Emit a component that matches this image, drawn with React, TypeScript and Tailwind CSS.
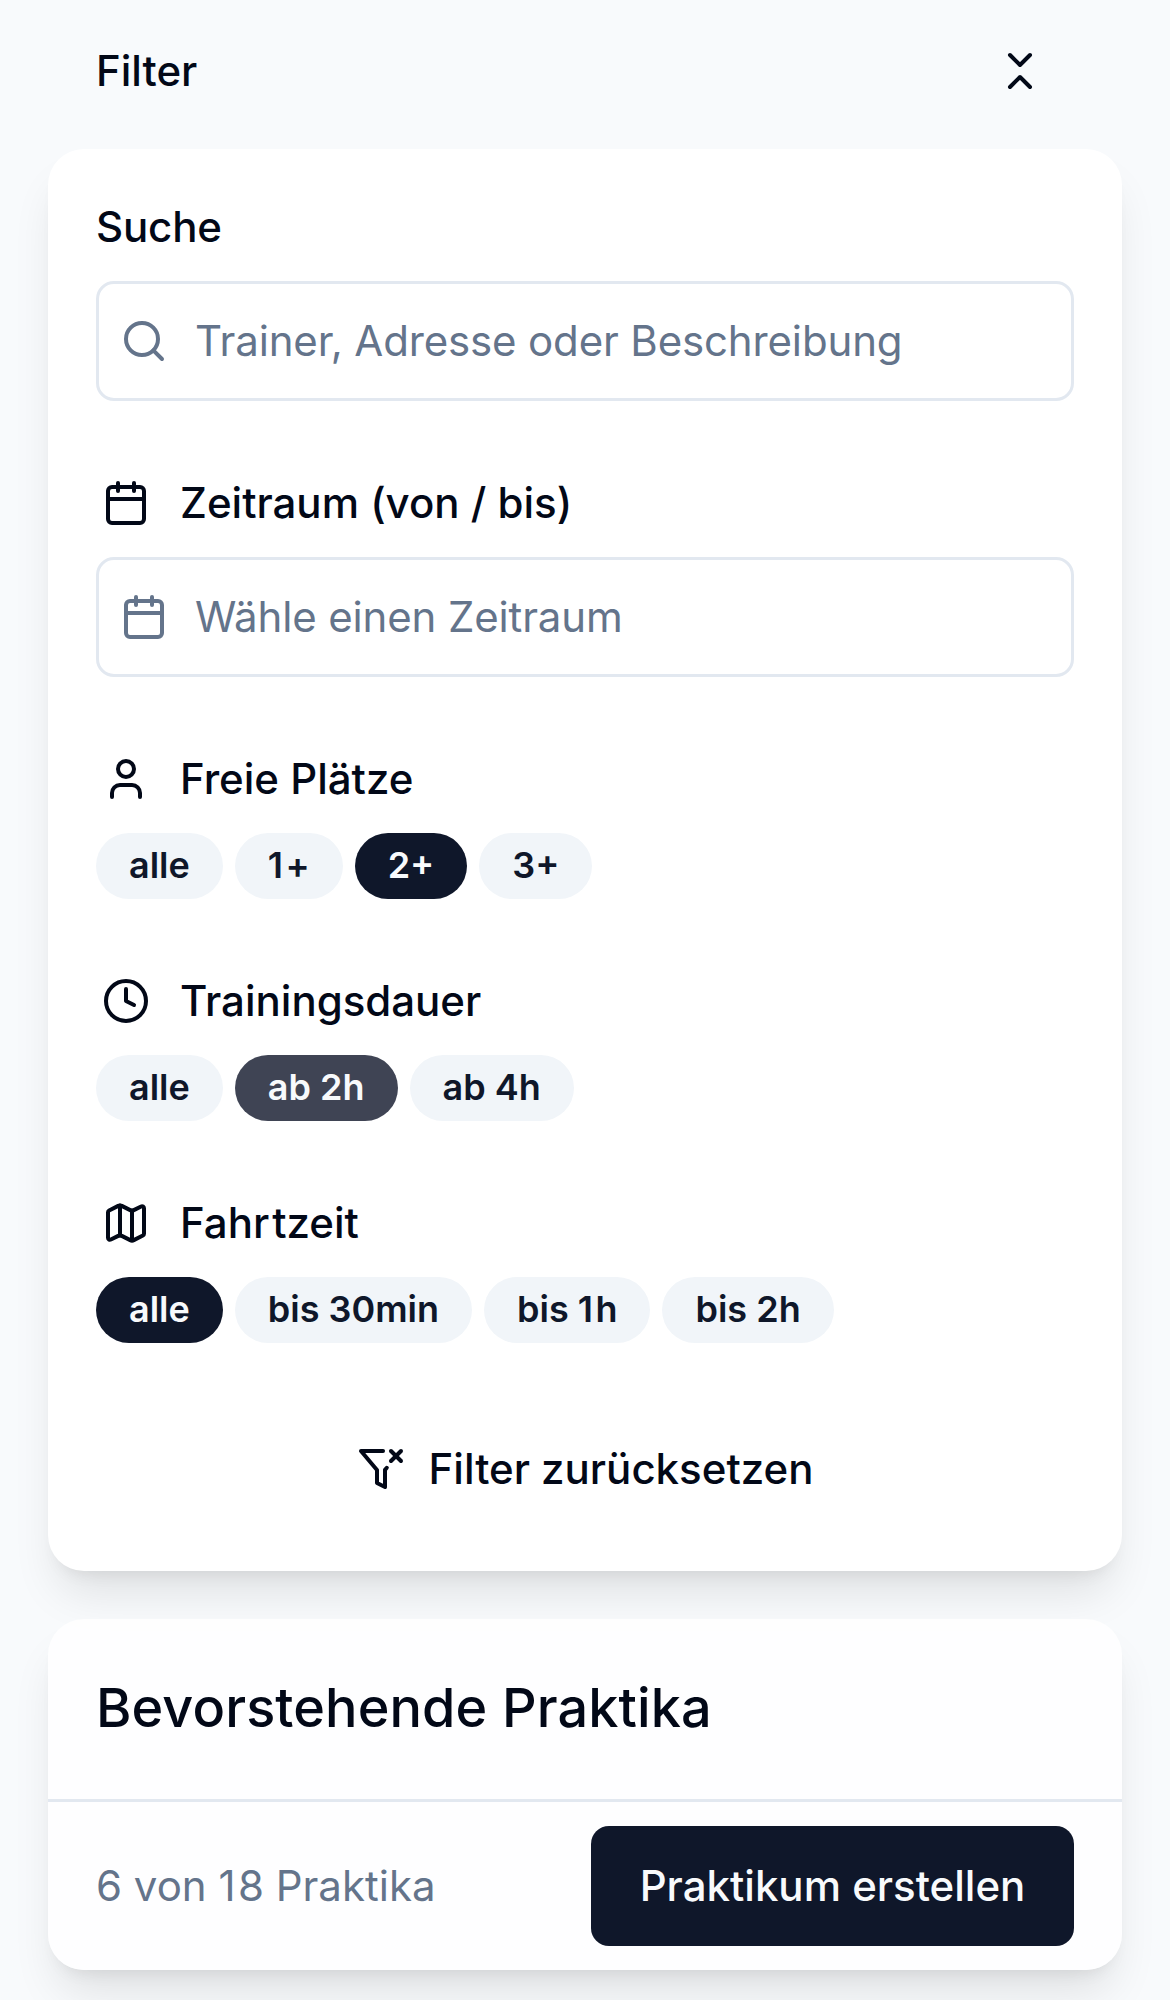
import { Search, Calendar, User, Clock, Map } from 'lucide-react';
import type { ReactNode } from 'react';

/* The digit one is set slightly wider than the font's own advance. */
function WideOnes({ text }: { text: string }) {
  const parts = text.split('1');
  return (
    <>
      {parts.map((p, i) => (
        <span key={i}>
          {i > 0 && <span className="tracking-[2.4px]">1</span>}
          {p}
        </span>
      ))}
    </>
  );
}

function Pills({ items, active, tone = 'bg-[#0f172a]' }: { items: string[]; active: number; tone?: string }) {
  return (
    <div className="mt-6 flex gap-3">
      {items.map((t, i) => (
        <button key={t} className={`h-[66px] rounded-full px-[33px] pb-[2px] text-[36px] leading-[48px] font-semibold whitespace-pre ${i === active ? tone + ' text-[#f8fafc]' : 'bg-[#f1f5f9] text-[#0f172a]'}`}>
          <WideOnes text={t} />
        </button>
      ))}
    </div>
  );
}

function Heading({ icon, children }: { icon: ReactNode; children: ReactNode }) {
  return (
    <div className="mt-[72px] flex h-[60px] items-center gap-[30px] pl-[6px] text-[42px] leading-[60px] font-medium">
      {icon}
      <span>{children}</span>
    </div>
  );
}

function FilterX() {
  return (
    <svg className="size-12" viewBox="0 0 24 24" fill="none" stroke="currentColor" strokeWidth="2" strokeLinecap="round" strokeLinejoin="round">
      <path d="M13.013 3H2l8 9.46V19l4 2v-8.54l.9-1.055" />
      <path d="m22 3-5 5" />
      <path d="m17 3 5 5" />
    </svg>
  );
}

export default function App() {
  return (
    <div className="h-[2000px] w-[1170px] overflow-hidden bg-[#f8fafc] px-12 font-['Inter',sans-serif] text-[#020817]">
      <header className="flex h-[149px] items-center justify-between px-12 pb-[7px] text-[42px] leading-[60px] font-medium">
        <span>Filter</span>
        <svg className="mr-[30px] size-12" viewBox="0 0 24 24" fill="none" stroke="currentColor" strokeWidth="2" strokeLinecap="round" strokeLinejoin="round">
          <path d="m7 20 5-5 5 5" />
          <path d="m7 4 5 5 5-5" />
        </svg>
      </header>
      <section className="h-[1422px] rounded-[36px] bg-white px-12 pt-[48px] shadow-[0_30px_45px_-9px_rgba(0,0,0,0.1),0_12px_18px_-12px_rgba(0,0,0,0.1)]">
        <div className="h-[60px] text-[42px] leading-[60px] font-medium tracking-[-0.15px]">Suche</div>
        <div className="mt-6 flex h-[120px] items-center gap-[27px] rounded-[18px] border-[3px] border-[#e2e8f0] px-[21px] text-[42px] leading-[60px] tracking-[-0.15px] text-[#64748b]">
          <Search className="size-12" />
          <span className="pb-px">Trainer, Adresse oder Beschreibung</span>
        </div>
        <Heading icon={<Calendar className="size-12" />}>Zeitraum (von / bis)</Heading>
        <div className="mt-6 flex h-[120px] items-center gap-[27px] rounded-[18px] border-[3px] border-[#e2e8f0] px-[21px] text-[42px] leading-[60px] tracking-[-0.15px] text-[#64748b]">
          <Calendar className="size-12" />
          <span className="pb-px">Wähle einen Zeitraum</span>
        </div>
        <Heading icon={<User className="size-12" />}>Freie Plätze</Heading>
        <Pills items={['alle', '1+', '2+', '3+']} active={2} />
        <Heading icon={<Clock className="size-12" />}>Trainingsdauer</Heading>
        <Pills items={['alle', 'ab 2h', 'ab 4h']} active={1} tone="bg-[#3f4454]" />
        <Heading icon={<Map className="size-12" />}>Fah<span className="tracking-[3px]">r</span>tzeit</Heading>
        <Pills items={['alle', 'bis 30min', 'bis 1h', 'bis 2h']} active={0} />
        <div className="mt-[66px] flex h-[120px] items-center justify-center gap-6 text-[42px] leading-[60px] font-medium">
          <FilterX />
          <span>Filter zurücksetzen</span>
        </div>
      </section>
      <section className="mt-12 h-[351px] rounded-[36px] bg-white/85 shadow-[0_30px_45px_-9px_rgba(0,0,0,0.1),0_12px_18px_-12px_rgba(0,0,0,0.1)]">
        <h2 className="flex h-[183px] items-center border-b-[3px] border-[#e2e8f0] px-12 pb-[2px] text-[54px] leading-[54px] font-medium tracking-[0.1px]">Bevorstehende Praktika</h2>
        <div className="flex h-[168px] items-center justify-between px-12 text-[42px] leading-[60px]">
          <span className="whitespace-pre text-[#64748b]"><WideOnes text="6 von 18 Praktika" /></span>
          <button className="h-[120px] w-[483px] rounded-[18px] bg-[#0f172a] font-medium text-[#f8fafc]">Praktikum erstellen</button>
        </div>
      </section>
    </div>
  );
}
